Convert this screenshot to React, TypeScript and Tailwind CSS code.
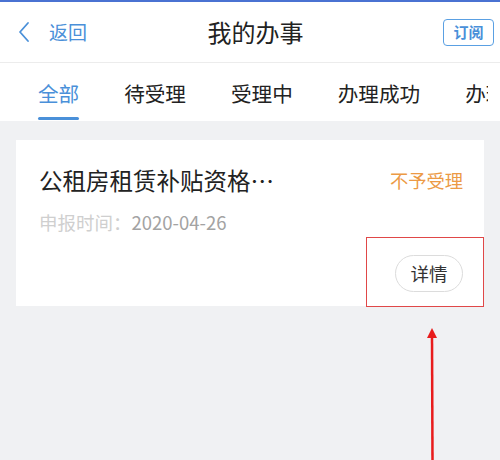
import React from "react";

const tabs = ["全部", "待受理", "受理中", "办理成功", "办理失败"];

const Header = () => {
  return (
    <div className="flex h-[61px] items-center border-b border-[#ececec] bg-white pl-[17px] pr-[6px]">
      <div className="flex w-[120px] items-center text-[#4a90d9]">
        <svg width="14" height="24" viewBox="0 0 14 24" className="mr-[18px]">
          <path
            d="M11 3 L3 12 L11 21"
            fill="none"
            stroke="#4a90d9"
            strokeWidth="1.8"
            strokeLinecap="round"
            strokeLinejoin="round"
          />
        </svg>
        <span className="text-[19px]">返回</span>
      </div>
      <div className="flex-1 text-center text-[24px] text-[#222]">我的办事</div>
      <div className="flex w-[120px] justify-end">
        <div className="flex h-[27px] w-[51px] items-center justify-center rounded-[4px] border-[1.5px] border-[#5aa0e3] text-[15px] font-bold text-[#4a90d9]">
          订阅
        </div>
      </div>
    </div>
  );
};

const Tabs = () => {
  return (
    <div className="h-[58px] bg-white">
      <div className="flex h-full w-[488px] gap-[45px] overflow-hidden whitespace-nowrap pl-[38px] pt-[3px]">
        {tabs.map((t, i) => (
          <div key={t} className="relative flex shrink-0 items-center">
            <span
              className={
                i === 0 ? "text-[20.6px] text-[#4a90d9]" : "text-[20.6px] text-[#222]"
              }
            >
              {t}
            </span>
            {i === 0 && (
              <div className="absolute bottom-[1px] left-0 h-[3px] w-full rounded-full bg-[#4a90d9]" />
            )}
          </div>
        ))}
      </div>
    </div>
  );
};

const Card = () => {
  return (
    <div className="mx-[16px] mt-[19px] h-[166px] bg-white pl-[23px] pr-[21px] pt-[25px]">
      <div className="flex items-center justify-between leading-[30px]">
        <span className="text-[23.5px] text-[#222]">公租房租赁补贴资格…</span>
        <span className="text-[18.3px] text-[#ec9a45]">不予受理</span>
      </div>
      <div className="mt-[14px] text-[18.5px] leading-[26px]">
        <span className="text-[#cfcfcf]">申报时间：</span>
        <span className="text-[#a3a3a3]">2020-04-26</span>
      </div>
      <div className="mt-[20px] flex justify-end">
        <div className="flex h-[37px] w-[68px] items-center justify-center rounded-full border border-[#dcdcdc] text-[18.5px] text-[#333]">
          详情
        </div>
      </div>
    </div>
  );
};

export default function App() {
  return (
    <div
      className="relative h-[460px] w-[500px] overflow-hidden bg-[#f0f1f3]"
      style={{ fontFamily: '"Noto Sans CJK SC", "Noto Sans", sans-serif' }}
    >
      <div className="h-[2px] bg-[#4a72d2]" />
      <Header />
      <Tabs />
      <Card />

      {/* annotation */}
      <div className="absolute left-[366px] top-[237px] h-[70px] w-[118px] border-[1.5px] border-[#e04848]" />
      <svg className="absolute left-[422px] top-[326px]" width="20" height="134" viewBox="0 0 20 134">
        <path d="M10 2 L5 12 L15 12 Z" fill="#e81c1c" />
        <path d="M10 10 L10.5 134" stroke="#e81c1c" strokeWidth="2.5" />
      </svg>
    </div>
  );
}
